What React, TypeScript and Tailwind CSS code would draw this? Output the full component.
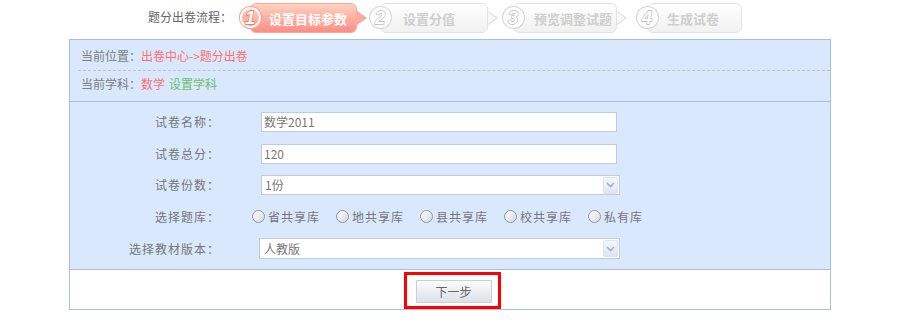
import React from 'react';

const font = "font-['Noto_Sans_CJK_SC','Noto_Sans',sans-serif]";

type StepProps = {
  n: number;
  label: string;
  active?: boolean;
  bodyW: string;
  textPad: string;
  mr: string;
  arrow?: boolean;
};

function Step({ n, label, active, bodyW, textPad, mr, arrow = true }: StepProps) {
  return (
    <div className={`relative mt-[3px] h-[30px] pl-[10px] ${mr}`}>
      <div
        className={`flex h-[30px] items-center rounded-[6px] border ${bodyW} ${textPad} ${
          active
            ? 'border-[#f5ab9b] bg-gradient-to-b from-[#ffd2c0] to-[#ff8c84] text-white'
            : 'border-[#e3e3e3] bg-gradient-to-b from-[#ffffff] to-[#f1f1f1] text-[#cfcfcf]'
        }`}
      >
        <span className="text-[13px] font-bold leading-none">{label}</span>
      </div>
      {arrow && (
        <>
          <span
            className={`absolute right-[-10px] top-[8px] h-[14px] w-[10px] [clip-path:polygon(0_0,100%_50%,0_100%)] ${
              active ? 'bg-[#f5a696]' : 'bg-[#dedede]'
            }`}
          />
          <span
            className={`absolute right-[-8px] top-[9px] h-[12px] w-[8px] [clip-path:polygon(0_0,100%_50%,0_100%)] ${
              active ? 'bg-[#ffaa9a]' : 'bg-[#f8f8f8]'
            }`}
          />
        </>
      )}
      <span
        className={`absolute left-0 top-[4px] flex h-[21px] w-[21px] items-center justify-center rounded-full border-2 ${
          active
            ? 'border-white bg-gradient-to-b from-[#ffd0c0] to-[#ffa090] [box-shadow:0_0_0_1px_#f5a090]'
            : 'border-white bg-[#fbfbfb] [box-shadow:0_0_0_1px_#d6d6d6]'
        }`}
      >
        <span
          className={`pr-[1px] font-['Liberation_Sans',sans-serif] text-[18px] font-bold italic leading-none text-white ${
            active ? '[-webkit-text-stroke:1.3px_#ef7565]' : '[-webkit-text-stroke:1.3px_#bcbcbc]'
          } [paint-order:stroke_fill]`}
        >
          {n}
        </span>
      </span>
    </div>
  );
}

function Chevron() {
  return (
    <span className="mr-[1px] flex h-[17px] w-[15px] items-center justify-center rounded-[2px] border border-[#dbe3ee] bg-gradient-to-b from-[#f4f7fb] to-[#dfe6f0]">
      <svg width="9" height="6" viewBox="0 0 9 6">
        <path d="M1 1 L4.5 4.5 L8 1" stroke="#9fb0c8" strokeWidth="1.6" fill="none" />
      </svg>
    </span>
  );
}

function Radio({ label }: { label: string }) {
  return (
    <label className="mr-[16px] flex items-center">
      <span className="h-[13px] w-[13px] rounded-full border border-[#8e9aa8] bg-gradient-to-br from-[#ffffff] to-[#d4d8dc]" />
      <span className="ml-[3px] w-[52px] tracking-[1px]">{label}</span>
    </label>
  );
}

export default function App() {
  const radios = ['省共享库', '地共享库', '县共享库', '校共享库', '私有库'];

  return (
    <div className={`h-[322px] w-[900px] bg-white text-[12px] text-[#777] ${font}`}>
      <div className="flex h-[39px] items-start pl-[148px]">
        <span className="mt-[11px] text-[12px] leading-none text-[#666]">题分出卷流程：</span>
        <div className="ml-[8px] flex">
          <Step n={1} label="设置目标参数" active bodyW="w-[107px]" textPad="pl-[18px]" mr="mr-[13px]" />
          <Step n={2} label="设置分值" bodyW="w-[108px]" textPad="pl-[22px]" mr="mr-[15px]" />
          <Step n={3} label="预览调整试题" bodyW="w-[104px]" textPad="pl-[20px]" mr="mr-[20px]" />
          <Step n={4} label="生成试卷" bodyW="w-[95px]" textPad="pl-[19px]" mr="" arrow={false} />
        </div>
      </div>

      <div className="ml-[69px] w-[762px] border border-[#a8bee4] bg-[#d9e8fd]">
        {/* position / subject */}
        <div className="border-b border-[#a8bee4] pl-[8px]">
          <div className="flex h-[31px] items-center border-b border-dashed border-[#c4c4c4] pl-[3px] pt-[1px] leading-none">
            <span className="text-[#808080]">当前位置：</span>
            <span className="text-[#ff7070]">出卷中心-&gt;题分出卷</span>
          </div>
          <div className="flex h-[30px] items-center pb-[4px] pl-[3px] leading-none">
            <span className="text-[#808080]">当前学科：</span>
            <span className="text-[#ff7070]">数学</span>
            <span className="ml-[4px] text-[#6cc06c]">设置学科</span>
          </div>
        </div>

        {/* form */}
        <div className="flex flex-col gap-[11.5px] border-b border-[#a8bee4] pb-[10px] pt-[10px] leading-none">
          <div className="flex h-[20px] items-center">
            <span className="w-[150px] text-right tracking-[1px]">试卷名称：</span>
            <div className="ml-[41px] flex h-[20px] w-[356px] items-center border border-[#bccde0] bg-white pl-[2px] text-[#777]">
              数学2011
            </div>
          </div>
          <div className="flex h-[20px] items-center">
            <span className="w-[150px] text-right tracking-[1px]">试卷总分：</span>
            <div className="ml-[41px] flex h-[20px] w-[356px] items-center border border-[#bccde0] bg-white pl-[2px] text-[#777]">
              120
            </div>
          </div>
          <div className="flex h-[20px] items-center">
            <span className="w-[150px] text-right tracking-[1px]">试卷份数：</span>
            <div className="ml-[41px] flex h-[20px] w-[359px] items-center justify-between border border-[#bccde0] bg-white pl-[3px] text-[#777]">
              <span>1份</span>
              <Chevron />
            </div>
          </div>
          <div className="flex h-[20px] items-center">
            <span className="w-[150px] text-right tracking-[1px]">选择题库：</span>
            <div className="ml-[32px] flex items-center text-[#777]">
              {radios.map((r) => (
                <Radio key={r} label={r} />
              ))}
            </div>
          </div>
          <div className="flex h-[21px] items-center">
            <span className="w-[150px] text-right tracking-[1px]">选择教材版本：</span>
            <div className="ml-[39px] flex h-[21px] w-[361px] items-center justify-between border border-[#bccde0] bg-white pl-[4px] text-[#777]">
              <span>人教版</span>
              <Chevron />
            </div>
          </div>
        </div>

        {/* action */}
        <div className="flex h-[39px] justify-center bg-white pt-[2px]">
          <div className="ml-[4px] h-[37px] w-[97px] border-[3px] border-[#ff0000] pl-[9px] pt-[5px]">
            <button
              type="button"
              className="flex h-[23px] w-[76px] items-center justify-center border border-[#cfcfcf] bg-gradient-to-b from-[#fbfbfb] to-[#dde2e7] text-[12px] leading-none text-[#666]"
            >
              下一步
            </button>
          </div>
        </div>
      </div>
    </div>
  );
}
